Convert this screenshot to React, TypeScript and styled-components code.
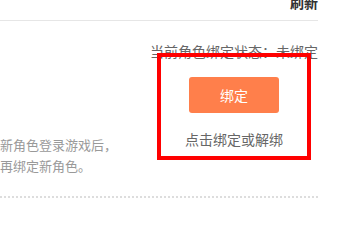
import React from 'react'
import styled, { createGlobalStyle } from 'styled-components'

const GlobalStyle = createGlobalStyle`
  html, body {
    margin: 0;
    padding: 0;
    background: #fff;
    overflow: hidden;
  }
  body {
    font-family: "Noto Sans CJK SC", "Noto Sans", sans-serif;
  }
`

const Panel = styled.div`
  position: relative;
  width: 318px;
`

const Header = styled.div`
  display: flex;
  justify-content: flex-end;
  height: 20px;
  border-bottom: 1px solid #e6e6e6;
`

const RefreshLink = styled.span`
  font-size: 14px;
  font-weight: 700;
  line-height: 16px;
  margin-top: -6px;
  color: #333;
  cursor: pointer;
`

const Status = styled.div`
  margin-top: 20px;
  font-size: 14px;
  line-height: 20px;
  color: #666;
  text-align: right;
  white-space: nowrap;
`

const Body = styled.div`
  display: flex;
`

const Tips = styled.div`
  flex: 1;
  padding-top: 73px;
  font-size: 13px;
  line-height: 21px;
  color: #999;
  white-space: nowrap;
`

const BindColumn = styled.div`
  width: 168px;
  padding-top: 16px;
  display: flex;
  flex-direction: column;
  align-items: center;
`

const BindButton = styled.button`
  width: 90px;
  height: 36px;
  border: none;
  border-radius: 3px;
  background: #ff7f4b;
  color: #fff;
  font-family: inherit;
  font-size: 14px;
  line-height: 36px;
  padding: 0;
  cursor: pointer;
`

const Hint = styled.div`
  margin-top: 16px;
  font-size: 14px;
  line-height: 20px;
  color: #666;
`

const Divider = styled.div`
  margin-top: 20px;
  border-top: 2px dotted #ddd;
`

// 标注框，盖在内容上面
const Highlight = styled.div`
  position: absolute;
  left: 157px;
  top: 53px;
  width: 154px;
  height: 107px;
  box-sizing: border-box;
  border: 4px solid #ff0000;
  pointer-events: none;
`

export default function App() {
  return (
    <>
      <GlobalStyle />
      <Panel>
        <Header>
          <RefreshLink>刷新</RefreshLink>
        </Header>
        <Status>当前角色绑定状态：未绑定</Status>
        <Body>
          <Tips>
            新角色登录游戏后，
            <br />
            再绑定新角色。
          </Tips>
          <BindColumn>
            <BindButton>绑定</BindButton>
            <Hint>点击绑定或解绑</Hint>
          </BindColumn>
        </Body>
        <Divider />
        <Highlight />
      </Panel>
    </>
  )
}
